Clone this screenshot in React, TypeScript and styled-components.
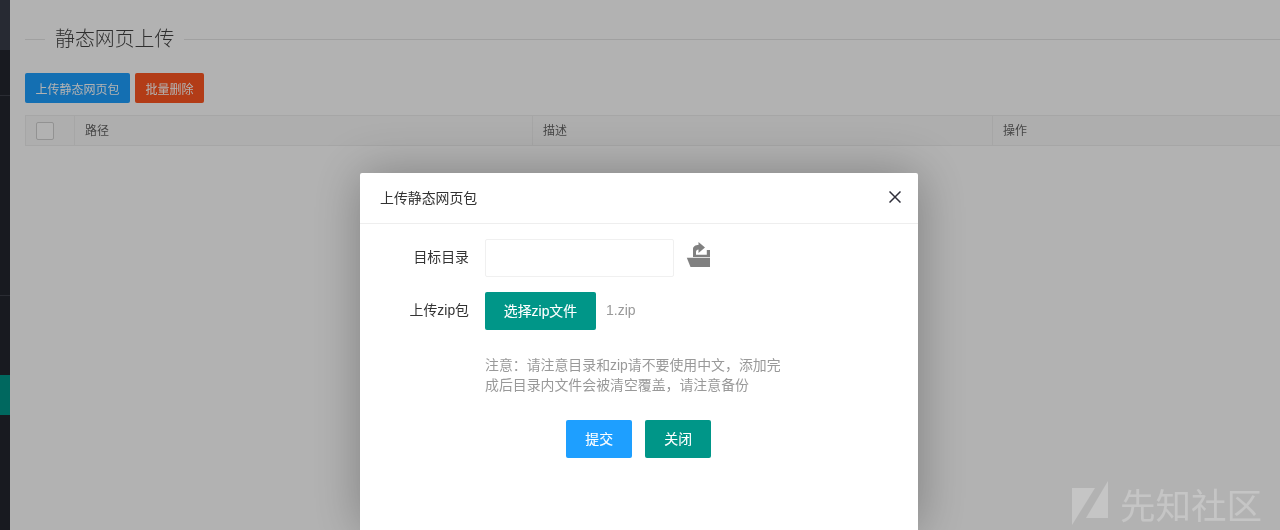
import React from 'react';
import styled, { createGlobalStyle } from 'styled-components';

const COLUMNS = ['路径', '描述', '操作'];

function App() {
  return (
    <>
      <GlobalStyle />
      <Page>
        <Sidebar>
          <SideLogo />
          <SideBlock $height={46} $line />
          <SideBlock $height={200} $line />
          <SideBlock $height={79} />
          <SideBlock $height={40} $active />
        </Sidebar>
        <Content>
          <TitleField>
            <legend>静态网页上传</legend>
          </TitleField>
          <Toolbar>
            <SmallButton $color="#1e9fff">上传静态网页包</SmallButton>
            <SmallButton $color="#ff5722">批量删除</SmallButton>
          </Toolbar>
          <TableHead>
            <CheckCell>
              <CheckBox />
            </CheckCell>
            {COLUMNS.map((name) => (
              <HeadCell key={name}>{name}</HeadCell>
            ))}
          </TableHead>
        </Content>
      </Page>

      <Shade />

      <Dialog>
        <DialogTitle>
          上传静态网页包
          <CloseIcon viewBox="0 0 12 12">
            <path d="M.5 .5L11.500 11.500M11.500 .5L.5 11.500" />
          </CloseIcon>
        </DialogTitle>
        <DialogBody>
          <FormRow>
            <FormLabel>目标目录</FormLabel>
            <TextInput />
            <FolderIcon viewBox="0 0 24 25">
              <path d="M7 15V7C7 4.500 9.500 3 12.500 3V0L19 5.500 12.500 11V7.500C11 7.500 10 8.500 10 10V12.800H20.800V8H24V15Z" />
              <path d="M.8 15.800H24V25H4.500z" />
            </FolderIcon>
          </FormRow>
          <FormRow>
            <FormLabel>上传zip包</FormLabel>
            <MainButton $color="#009688" $width={111}>
              选择zip文件
            </MainButton>
            <FileName>1.zip</FileName>
          </FormRow>
          <Note>注意：请注意目录和zip请不要使用中文，添加完成后目录内文件会被清空覆盖，请注意备份</Note>
          <Actions>
            <MainButton $color="#1e9fff" $width={66}>
              提交
            </MainButton>
            <MainButton $color="#009688" $width={66}>
              关闭
            </MainButton>
          </Actions>
        </DialogBody>
      </Dialog>

      <Watermark>
        <svg width="36" height="45" viewBox="0 0 36 45">
          <path d="M0 7H23L0 44z" />
          <path d="M36 0V37H14z" />
        </svg>
        <span>先知社区</span>
      </Watermark>
    </>
  );
}
export default App;

const GlobalStyle = createGlobalStyle`
  html, body {
    margin: 0;
    height: 530px;
    overflow: hidden;
    background: #fff;
  }
  body {
    font-family: "Liberation Sans", "Noto Sans CJK SC", sans-serif;
    color: #333;
  }
  #root {
    height: 530px;
    filter: blur(0.4px);
  }
`;

const Page = styled.div`
  display: flex;
  width: 1280px;
  height: 530px;
  overflow: hidden;
`;

const Sidebar = styled.div`
  flex: none;
  width: 10px;
  background: #23262e;
`;

const SideLogo = styled.div`
  height: 50px;
  background: #393d49;
`;

const SideBlock = styled.div<{ $height: number; $line?: boolean; $active?: boolean }>`
  height: ${(p) => p.$height}px;
  box-sizing: border-box;
  background: ${(p) => (p.$active ? '#009688' : 'transparent')};
  border-bottom: ${(p) => (p.$line ? '1px solid #3d4049' : 'none')};
`;

const Content = styled.div`
  flex: none;
  width: 1270px;
  box-sizing: border-box;
  padding: 28px 0 0 15px;
`;

const TitleField = styled.fieldset`
  margin: 0 0 19px;
  padding: 0;
  height: 26px;
  box-sizing: border-box;
  border: 0;
  border-top: 1px solid #e6e6e6;
  & > legend {
    margin-left: 20px;
    padding: 0 10px;
    font-size: 19.900px;
    font-weight: 300;
    line-height: 22px;
    color: #444;
  }
`;

const Toolbar = styled.div`
  display: flex;
  gap: 5px;
  margin-bottom: 12px;
`;

const SmallButton = styled.button<{ $color: string }>`
  height: 30px;
  padding: 0 10.500px;
  border: 0;
  border-radius: 2px;
  background: ${(p) => p.$color};
  color: #fff;
  font: inherit;
  font-size: 12px;
`;

const TableHead = styled.div`
  display: grid;
  grid-template-columns: 49px 458px 460px 1fr;
  width: 1260px;
  height: 31px;
  box-sizing: border-box;
  background: #fafafa;
  border: 1px solid #eee;
`;

const CheckCell = styled.div`
  display: flex;
  align-items: center;
  padding-left: 10px;
  border-right: 1px solid #eee;
`;

const CheckBox = styled.span`
  width: 18px;
  height: 18px;
  box-sizing: border-box;
  background: #fff;
  border: 1px solid #d2d2d2;
  border-radius: 2px;
`;

const HeadCell = styled.div`
  padding-left: 10px;
  font-size: 12px;
  line-height: 30px;
  color: #666;
  border-right: 1px solid #eee;
`;

const Shade = styled.div`
  position: fixed;
  inset: 0;
  background: rgba(0, 0, 0, 0.3);
`;

const Dialog = styled.div`
  position: fixed;
  left: 360px;
  top: 173px;
  width: 557.500px;
  height: 357px;
  background: #fff;
  border-radius: 2px 2px 0 0;
  box-shadow: 1px 1px 50px rgba(0, 0, 0, 0.3);
`;

const DialogTitle = styled.div`
  display: flex;
  align-items: center;
  justify-content: space-between;
  height: 51px;
  box-sizing: border-box;
  padding: 0 17px 2px 20px;
  border-bottom: 1px solid #eee;
  font-size: 13.900px;
  color: #333;
`;

const CloseIcon = styled.svg`
  width: 12px;
  height: 12px;
  fill: none;
  stroke: #2f2f3a;
  stroke-width: 1.5;
`;

const DialogBody = styled.div`
  padding: 15px 0 0;
`;

const FormRow = styled.div`
  display: flex;
  align-items: center;
  height: 38px;
  margin-bottom: 15px;
`;

const FormLabel = styled.label`
  flex: none;
  width: 109px;
  margin: -4px 16px 0 0;
  text-align: right;
  font-size: 13.900px;
  color: #333;
`;

const TextInput = styled.input`
  width: 189px;
  height: 38px;
  box-sizing: border-box;
  border: 1px solid #f0f0f0;
  border-radius: 2px;
  background: #fff;
`;

const FolderIcon = styled.svg`
  align-self: flex-start;
  width: 24px;
  height: 25px;
  margin: 3px 0 0 12px;
  fill: #808080;
`;

const MainButton = styled.button<{ $color: string; $width: number }>`
  flex: none;
  width: ${(p) => p.$width}px;
  height: 38px;
  padding: 0 0 2px;
  border: 0;
  border-radius: 2px;
  background: ${(p) => p.$color};
  color: #fff;
  font: inherit;
  font-size: 13.900px;
  -webkit-text-stroke: 0.1px #fff;
`;

const FileName = styled.span`
  margin: -2px 0 0 10px;
  font-size: 14px;
  color: #999;
`;

const Note = styled.p`
  width: 300px;
  margin: 25px 0 0 125px;
  font-size: 13.900px;
  line-height: 20px;
  color: #999;
`;

const Actions = styled.div`
  display: flex;
  justify-content: center;
  gap: 13px;
  margin: 25px 0 0;
`;

const Watermark = styled.div`
  position: fixed;
  left: 1072px;
  top: 481px;
  display: flex;
  gap: 12px;
  color: rgba(255, 255, 255, 0.24);
  font-size: 35.500px;
  line-height: 45px;
  font-family: "Noto Sans CJK SC", sans-serif;
  font-weight: 400;
  white-space: nowrap;
  & > svg {
    flex: none;
    fill: rgba(255, 255, 255, 0.24);
  }
`;
